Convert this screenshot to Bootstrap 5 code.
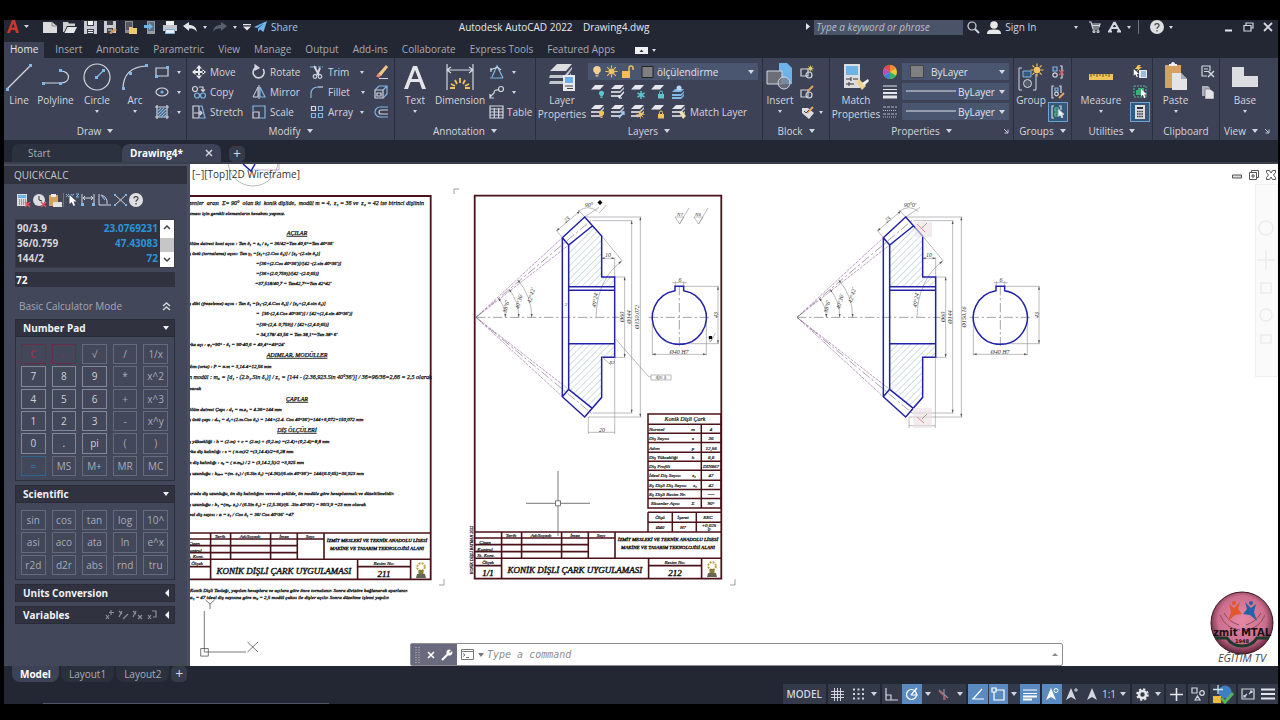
<!DOCTYPE html>
<html lang="en">
<head>
<meta charset="utf-8">
<meta name="viewport" content="width=device-width, initial-scale=1">
<title>Autodesk AutoCAD 2022 - Drawing4.dwg</title>
<link href="https://cdn.jsdelivr.net/npm/bootstrap@5.3.0/dist/css/bootstrap.min.css" rel="stylesheet">
<script src="https://cdn.jsdelivr.net/npm/bootstrap@5.3.0/dist/js/bootstrap.bundle.min.js"></script>
<style>
:root{--dark:#222733;--panel:#3d4256;--pal:#42475a;--box:#30333f;--txt:#d3d6de;--blue:#7fb8e6;--field:#4a5670}
body{font-family:"Open Sans","Noto Sans",sans-serif;font-size:10px;line-height:14px;color:var(--txt);background:#000;overflow:hidden}
.app{height:100vh;padding:20px 2px 16px 4px}
.tb{--bs-btn-padding-x:0;--bs-btn-padding-y:0;--bs-btn-border-width:0;--bs-btn-color:var(--txt);--bs-btn-font-size:10px;--bs-btn-line-height:14px;--bs-btn-border-radius:0;--bs-btn-hover-color:#fff;--bs-btn-hover-bg:#55607a;display:inline-flex;align-items:center;justify-content:center;flex:none;white-space:nowrap}
svg{display:block;flex:none;overflow:visible}
.i{fill:none;stroke:#d3d6de;stroke-width:1.2}
.s10{width:10px}.s14{width:14px}.s16{width:16px}.s20{width:20px}.s26{width:26px}.s30{width:30px}
.car{display:block;flex:none;width:0;height:0;border:3px solid transparent;border-top:4px solid currentColor;border-bottom:0}
.car.tiny{border-width:2px;border-top-width:3px;border-bottom:0}
.car.lft{border:4px solid transparent;border-right-color:currentColor;border-left:0}
.car.up{border-bottom:3px solid #888;border-top:0}
.title-row{height:22px;background:var(--dark);color:#e6e8ec}
.win-btns{margin-left:40px}
.search-in{width:149px;height:15px;background:#4b5369;border:0;color:#dfe2ea;font-style:italic;padding:0 2px}
.search-in::placeholder{color:#b9bdca}
.tab-row{height:16px;background:var(--dark)}
.tab-row a{color:#a7abb6;text-decoration:none;padding:0 7px;height:16px}
.tab-row a.active{background:var(--panel);color:#e6e8ec;padding:0 6px}
.ribbon{display:grid;grid-template-columns:183fr 208fr 141fr 227fr 67fr 184fr 58fr 81fr 67fr 58fr;background:var(--panel);height:82px}
.rpanel{border-right:1px solid #2a2f3d;min-width:0;display:flex;flex-direction:column}
.rpanel:last-child{border:0}
.rbody{display:flex;height:64px;padding-top:4px}
.rfoot{height:18px;display:flex;align-items:center;justify-content:center;gap:6px;position:relative}
.rfoot svg{position:absolute;right:4px;top:6px}
.big{flex-direction:column;justify-content:flex-start;height:60px}
.big svg{height:31px}
.big .car{margin-top:3px}
.colm{display:flex;flex-direction:column}
.colm>*{height:20px}
.rowb{gap:3px;justify-content:flex-start}
.fieldw{background:var(--field);height:17px;margin:1px 0 2px;position:relative;gap:3px}
.fieldw select{appearance:none;background:none;border:0;color:#e0e3ea;font-size:10px;padding:0;flex:1;min-width:0;outline-offset:0}
.fieldw select option{color:#000}
.on{background:#35597c;outline:1px solid #6ea3cf;outline-offset:-1px}
.doc-row{height:24px;background:var(--dark);border-bottom:2px solid #3a3f4e;padding-left:8px}
.dtab{height:18px;color:#a9adb8;text-decoration:none;background:#2c313f;border-radius:7px 7px 0 0}
.dtab.active{background:var(--panel);color:#fff;font-weight:700}
.plus{width:16px;height:16px;background:#363b4a;border-radius:5px;font-size:14px}
.palette{width:186px;background:var(--pal);border-right:3px solid #4a4e63;border-top:2px solid #4a4f60}
.pal-head{height:18px;background:var(--box);padding-left:10px;color:#c5c8d0}
.pal-body{padding:0 12px 0 11px}
.tools{padding:9px 0 12px}
.mode-row{padding:12px 4px 6px;color:#a4a8b5}
.hist{background:var(--box);height:49px;border:1px solid #393d4a}
.hist dl{line-height:15px;margin:0;padding:1px 2px 0 1px;font-weight:700}
.hist dt{font-weight:700}.hist dd{color:#2c93d8;margin:0}
.sbar{width:14px;background:#fff;color:#444}
.sbar b{height:14px;background:#c6c6c8}
.calc-in{width:100%;height:15px;background:var(--box);border:0;color:#fff;font-weight:700;padding:0 1px;display:block}
.sec-h{height:18px;background:var(--box);border:1px solid #282c38;color:#f0f1f4;font-weight:700;padding:0 5px 0 7px;width:100%;display:flex;align-items:center;justify-content:space-between}
.sec-b{border:1px solid #2c303d;border-top:0;padding:7px 6px 4px 5px}
.keys{display:grid;grid-template-columns:repeat(5,1fr);gap:2px 6px}
.keys button{border:1px solid #666b7c;background:none;color:#a8acb8;font-size:10px;line-height:14px;padding:0;min-width:0}
.keys .n{border-color:#82879a;color:#cfd2da}
.keys .r{border-color:#6b2c45;color:#96304a;font-weight:700}
.keys .e{border-color:#2f6690;color:#3587c0}
.canvas{background:#fff;min-width:0;overflow:hidden}
.cad{position:absolute;inset:0;width:100%;height:100%;font-family:"Liberation Serif",serif;font-style:italic}
.vlabel{position:absolute;left:2px;top:3px;color:#333}
.vwin{position:absolute;right:2px;top:6px;gap:7px}
.navbar-strip{position:absolute;right:0;top:20px;width:23px;height:193px;background:#fafafa;border:1px solid #f0f0f0}
.cmd{position:absolute;left:220px;bottom:0;width:60%;height:23px;border:1px solid #8c8c92;background:#fff;border-radius:2px}
.cmd-grip{width:46px;background:#6a6a7e;color:#fff}
.cmd input{border:0;flex:1;min-width:0;font:italic 10px "DejaVu Sans Mono",monospace;color:#555;padding:0 3px}
.cmd input::placeholder{color:#8e8e8e;opacity:1}
.logo{position:absolute;right:2px;bottom:0}
.bottom{height:38px;background:var(--dark)}
.lrow{gap:2px}
.ltab{height:16px;text-decoration:none;color:#a9adb8;background:#2b303e;border-radius:0 0 8px 8px}
.ltab.active{background:var(--panel);color:#fff;font-weight:700}
.status{height:20px;gap:2px}
.status>div{background:#353a4a;display:flex;align-items:center}
.status .tb{height:20px}
.status .s14{width:12px}
.status .a{background:#5b8ac0}
.status .a+.a{border-left:1px solid #353a4a}
.tline{position:absolute;left:39px;bottom:0;width:286px;height:1px;background:#4d5566}
</style>
</head>
<body>
<svg width="0" height="0" class="position-absolute" aria-hidden="true">
<defs>
 <symbol id="stack" viewBox="0 0 14 14"><path d="M4 0h9L9 4H0z" fill="#e4e6ea"/><path d="M0 6h9l4-4v2L9 8H0zM0 10h9l4-4v2l-4 4H0z" fill="#c3c6cf"/></symbol>
 <symbol id="sheet" viewBox="0 0 14 14"><path d="M4 1h9L9 5.500H0z" fill="#e4e6ea"/></symbol>
 <symbol id="lock" viewBox="0 0 8 8"><path d="M1 3.500h6V8H1z" fill="currentColor"/><path d="M2.500 3.500V2a1.500 1.500 0 0 1 3 0v1.500" fill="none" stroke="currentColor"/></symbol>
 <symbol id="bulb" viewBox="0 0 10 14"><path d="M5 1a4 4 0 0 0-2 7.500V10h4V8.500A4 4 0 0 0 5 1zM3.500 11h3v1.500h-3z" fill="currentColor"/></symbol>
 <symbol id="sun" viewBox="0 0 14 14"><circle cx="7" cy="7" r="3.300" fill="#f3c25b"/><path d="M7 .500v3M7 10.500v3M.500 7h3M10.500 7h3M2.400 2.400l2 2M9.600 9.600l2 2M2.400 11.600l2-2M9.600 4.400l2-2" stroke="#f3c25b" stroke-width="1.200"/></symbol>
 <symbol id="cursor" viewBox="0 0 8 12"><path d="M1 0v9l2.200-2L5 11l1.500-.7L5 6.500h3z" fill="#fff"/></symbol>
 <symbol id="launch" viewBox="0 0 6 6"><path d="M1 1l4 4M5 1.500V5H1.500" fill="none" stroke="#c5c8d0"/></symbol>
 <pattern id="hat" width="14" height="14" patternUnits="userSpaceOnUse" patternTransform="rotate(45)"><path d="M1 0v14" stroke="#8fb0ba" stroke-width="1.500"/></pattern>
 <symbol id="gear" viewBox="0 0 900 800">
  <path d="M356 195L427 138L455 168V291H494V320H356zM356 491H494V532H455V652L427 685L356 628z" fill="url(#hat)"/>
  <g fill="none" stroke="#b985c4" stroke-width="2.500" stroke-dasharray="9 3"><path d="M78 412L337 173M78 412L356 195M78 412L337 650M78 412L356 628"/></g>
  <g fill="none" stroke="#777" stroke-width="2" stroke-dasharray="28 8 7 8"><path d="M78 412H508M78 412L427 118M78 412L427 702M596 412H780M688 318V506"/></g>
  <g fill="none" stroke="#8d8d92" stroke-width="1.800">
   <path d="M166 412A88 88 0 0 0 145 355M206 412A128 128 0 0 0 177 328M245 412A167 167 0 0 0 203 300"/>
   <path d="M337 173L318 150M404 111L385 90M320 152L389 94M385 94Q414 72 442 94M404 111L447 82"/>
   <path d="M455 235H494M494 291V232M455 168L517 243M515 243Q440 300 438 412"/>
   <path d="M404 111H574M427 122H547M545 122V699M571 111V711M494 291H526M494 532H526M524 291V532M415 711H574M427 699H547"/>
   <path d="M607 412V526M769 412V526M607 523H769M701 319H806M688 491H806M804 319V491M668 308H710M676 319V304M701 319V304"/>
  </g>
  <g fill="#555"><path d="M389 94l-9 3 5 5zM320 152l9-3-5-5zM455 235l9-3v6zM494 235l-9-3v6zM607 523l10-3v6zM769 523l-10-3v6zM804 319l-3 10h6zM804 491l-3-10h6zM524 291l-3 10h6zM524 532l-3-10h6zM545 122l-3 10h6zM545 699l-3-10h6zM571 111l-3 10h6zM571 711l-3-10h6zM166 412l-3-10h6zM206 412l-3-10h6zM245 412l-3-10h6zM145 355l8 4-5 5zM177 328l8 5-5 4zM203 300l8 5-5 4zM515 243l-10 4 4 5z"/></g>
  <g fill="none" stroke="#2222a8" stroke-width="4.500"><path d="M337 173L404 111L455 168V291H494V532H455V652L404 711L337 650zM337 173L356 195L427 138M356 195V628L427 685M356 628L337 650M356 320H494M356 331H494M356 491H494"/><path d="M675 332A81 81 0 1 0 701 332V319H675z"/></g>
 </symbol>
 <symbol id="block" viewBox="0 0 250 50"><g fill="none" stroke="#4a1219" stroke-width="1.600"><path d="M1 1H247.600M1 7H141M1 13.600H114.300M1 20.600H114.300M1 27.300H247.600M1 34.600H27.600M174.600 34.600H227.600M27.600 1V47.600M47.600 1V27.300M87.600 1V27.300M114.300 1V27.300M141 1V27.300M174.600 27.300V47.600M227.600 27.300V47.600"/></g>
  <path d="M234 42h8l1 4h-10z" fill="#665"/><circle cx="238" cy="35" r="3.800" fill="none" stroke="#bfa545" stroke-width="2" stroke-dasharray="2 1"/><path d="M235.500 38h5v4h-5z" fill="#8a7a3c"/></symbol>
</defs>
</svg>

<div class="app d-flex flex-column">
<header>
 <div class="title-row d-flex align-items-center pb-2">
  <div class="d-flex align-items-center">
   <button class="tb btn s26" aria-label="Application menu"><svg width="22" height="14"><path d="M1 13L6 0h3l4 13h-3l-1-3H5l-1 3zM5.500 7.500h3L7.300 3.500z" fill="#c8382e"/><path d="M18 5h5l-2.500 3z" fill="#d3d6de"/></svg></button>
   <span class="s10"></span>
   <button class="tb btn s20" aria-label="New"><svg width="14" height="12"><path d="M0 1h9l5 4v7H0z" fill="#dcdcdc"/><path d="M9 1v4h5" fill="none" stroke="#888"/></svg></button>
   <button class="tb btn s20" aria-label="Open"><svg width="14" height="12"><path d="M0 1h5l1 1.500h6V5H4l-3 6H0z" fill="#cfcfcf"/><path d="M4.500 6H14l-3 6H1.500z" fill="#e6e6e6"/></svg></button>
   <button class="tb btn s20" aria-label="Save"><svg width="13" height="13"><path d="M0 0h13v13H0z" fill="#c9cbd0"/><path d="M3 0h7v5H3zM3 8h7v5H3z" fill="#3c3f49"/><path d="M4 0h5v4H4zM4 9h5v1H4zM4 11h5v1H4z" fill="#f0f0f0"/></svg></button>
   <button class="tb btn s20" aria-label="Save As"><svg width="13" height="13"><path d="M0 0h12v12H0z" fill="#c9cbd0"/><path d="M3 0h6v4H3zM3 7h6v5H3z" fill="#3c3f49"/><path d="M4 8.500h4v1H4z" fill="#f0f0f0"/><path d="M5 12l6-5 2 2-6 4z" fill="#d99c5b"/></svg></button>
   <button class="tb btn s20" aria-label="Open from web"><svg width="13" height="13"><path d="M1 0h8v12H1z" fill="#8c8e93"/><path d="M2 1h6v8H2z" fill="#55575e"/><path d="M5 6h3l1 1h4v6H5z" fill="#efc874"/></svg></button>
   <button class="tb btn s20" aria-label="Save to web"><svg width="13" height="13"><path d="M3 0h8v13H3z" fill="#9b9da3"/><path d="M4 1h6v9H4z" fill="#5b7084"/><path d="M0 4h5V2l4 3.500L5 9V7H0z" fill="#6fb4ea"/></svg></button>
   <button class="tb btn s20" aria-label="Plot"><svg width="14" height="13"><path d="M3 0h8v4H3z" fill="#eee"/><path d="M0 4h14v6H0z" fill="#c3c5ca"/><path d="M2 8h10v5H2z" fill="#7ab3e0"/><path d="M3 9h8v3H3z" fill="#e9eef3"/></svg></button>
   <button class="tb btn s20" aria-label="Undo"><svg width="14" height="10"><path d="M0 4l6-4v3c5 0 7 2 8 7-2-3-4-3.500-8-3.500V9z" fill="#e3e5ea"/></svg></button>
   <button class="tb btn s10" aria-label="Undo list"><i class="car tiny"></i></button>
   <button class="tb btn s20" aria-label="Redo"><svg width="14" height="10"><path d="M14 4L8 0v3C3 3 1 5 0 10c2-3 4-3.500 8-3.500V9z" fill="#5b606e"/></svg></button>
   <button class="tb btn s10" aria-label="Redo list"><i class="car tiny"></i></button>
   <button class="tb btn s14" aria-label="Customize quick access"><svg width="8" height="7"><path d="M0 0h8v1.200H0zM0 2.500h8L4 6.500z" fill="#e3e5ea"/></svg></button>
   <button class="tb btn gap-1" style="color:#9fcbee"><svg width="13" height="12"><path d="M0 6L13 0 9.500 11 6 8.500 4 11V7.500L10 2.500 3 7z" fill="#6db5ec"/></svg>Share</button>
  </div>
  <div class="flex-fill text-center ps-2">Autodesk AutoCAD 2022 &nbsp;&nbsp; Drawing4.dwg</div>
  <div class="d-flex align-items-center">
   <svg width="12" height="8"><path d="M4 0v7l4-3.500z" fill="#e3e5ea"/></svg>
   <input class="search-in" type="search" placeholder="Type a keyword or phrase" aria-label="Type a keyword or phrase">
   <button class="tb btn s20" aria-label="Search"><svg width="12" height="12" class="i"><circle cx="5" cy="5" r="4"/><path d="M8 8l4 4" stroke-width="2"/></svg></button>
   <button class="tb btn gap-1 ms-1"><svg width="14" height="13" fill="#e8e8e8"><circle cx="7" cy="4" r="3.800"/><path d="M0 13c0-4 3-4.500 7-4.500s7 .5 7 4.500z"/></svg>Sign In</button>
   <button class="tb btn s14 ms-4 ps-3" aria-label="Account list"><i class="car tiny"></i></button>
   <button class="tb btn s20 ms-2" aria-label="App store"><svg width="11" height="12" class="i"><path d="M0 1h2l2 7h6M3 3h8l-1 3H4M3.500 4.500h7"/><circle cx="5" cy="10.500" r="1"/><circle cx="9" cy="10.500" r="1"/></svg></button>
   <button class="tb btn s20" aria-label="Autodesk apps"><svg width="13" height="12" class="i" style="stroke-width:2"><path d="M6.500 1L1.500 10M6.500 1l5 9M4 7h5M0 10.500h4M9 10.500h4"/></svg></button>
   <button class="tb btn s10" aria-label="Apps list"><i class="car tiny"></i></button>
   <span class="border-start border-secondary ms-1 ps-2">&nbsp;</span>
   <button class="tb btn s14" aria-label="Help"><svg width="14" height="14"><circle cx="7" cy="7" r="7" fill="#dedfe3"/><path d="M4.800 5.400C5 2.800 9.200 3 9 5.500 8.900 7 7 7 7 8.800M7 10v1.500" fill="none" stroke="#444" stroke-width="1.200"/></svg></button>
   <button class="tb btn s14" aria-label="Help list"><i class="car tiny"></i></button>
   <div class="win-btns d-flex">
   <button class="tb btn s20" aria-label="Minimize"><svg width="8" height="10"><path d="M1 8.500h7" stroke="#e3e5ea" stroke-width="2"/></svg></button>
   <button class="tb btn s20" aria-label="Restore"><svg width="11" height="10" class="i"><path d="M3 3V1h7v5H8M1 3.500h7V9H1z"/></svg></button>
   <button class="tb btn s20" aria-label="Close"><svg width="10" height="10" class="i" style="stroke-width:1.800"><path d="M1 1l8 8M9 1L1 9"/></svg></button>
   </div>
  </div>
 </div>

 <nav class="tab-row d-flex align-items-center" aria-label="Ribbon tabs">
  <a class="active me-1" href="#">Home</a><a href="#">Insert</a><a href="#">Annotate</a><a href="#">Parametric</a><a href="#">View</a><a href="#">Manage</a><a href="#">Output</a><a href="#">Add-ins</a><a href="#">Collaborate</a><a href="#">Express Tools</a><a href="#">Featured Apps</a>
  <button class="tb btn s30 gap-1 ms-2" aria-label="Minimize ribbon"><svg width="13" height="7"><path d="M0 0h13v7H0z" fill="#f0f0f2"/><path d="M4.500 5h4l-2-2.500z" fill="#333"/></svg><i class="car tiny"></i></button>
 </nav>

 <div class="ribbon">
  <section class="rpanel">
   <div class="rbody">
    <button class="tb btn big s30"><svg width="28" height="31" class="i"><path d="M2 27L26 3"/><path d="M1 26h3v3H1zM24 2h3v3h-3z" fill="#7fb8e6" stroke="none"/></svg>Line</button>
    <button class="tb btn big" style="width:43px"><svg width="30" height="31" class="i"><path d="M2 21h18c11-1 9-12 0-12"/><path d="M1 20h3v3H1zM18 20h3v3h-3zM18 7h3v3h-3z" fill="#7fb8e6" stroke="none"/></svg>Polyline</button>
    <button class="tb btn big" style="width:40px"><svg width="28" height="31" class="i"><circle cx="14" cy="15" r="13"/><path d="M14 15l7-7" stroke="#7fb8e6"/><path d="M12 14h3v3h-3zM19 7h3v3h-3z" fill="#7fb8e6" stroke="none"/></svg>Circle<i class="car tiny"></i></button>
    <button class="tb btn big" style="width:36px"><svg width="28" height="31" class="i"><path d="M2 27Q2 5 26 4"/><path d="M1 25h3v3H1zM24 2h3v3h-3zM8 10h3v3H8z" fill="#7fb8e6" stroke="none"/></svg>Arc<i class="car tiny"></i></button>
    <div class="colm">
     <button class="tb btn s30 gap-2" aria-label="Rectangle"><svg width="14" height="12" class="i"><path d="M1 2h12v8H1z"/><path d="M0 9h3v3H0zM11 0h3v3h-3z" fill="#7fb8e6" stroke="none"/></svg><i class="car tiny"></i></button>
     <button class="tb btn s30 gap-2" aria-label="Ellipse"><svg width="14" height="12" class="i"><ellipse cx="7" cy="6" rx="6" ry="4"/><circle cx="7" cy="6" r="1" fill="#7fb8e6" stroke="#7fb8e6"/></svg><i class="car tiny"></i></button>
     <button class="tb btn s30 gap-2" aria-label="Hatch"><svg width="14" height="14" class="i"><path d="M2 0v14M12 0v14M0 2h14M0 12h14"/><path d="M3 6l3-3M3 9l6-6M3 12l8-8M6 12l5-5M9 12l2-2" stroke="#7fb8e6"/></svg><i class="car tiny"></i></button>
    </div>
   </div>
   <div class="rfoot">Draw <i class="car"></i></div>
  </section>

  <section class="rpanel">
   <div class="rbody ps-1">
    <div class="colm" style="width:60px">
     <button class="tb btn rowb"><svg width="16" height="14" fill="#e8e9ed"><path d="M7 3h2v8H7zM3 6h10v2H3zM8 0l3 3.500H5zM8 14l3-3.500H5zM1 7l3.500-3v6zM15 7l-3.500-3v6z"/></svg>Move</button>
     <button class="tb btn rowb"><svg width="16" height="14" class="i"><circle cx="4" cy="4" r="2.500"/><circle cx="6" cy="10.500" r="2.500" stroke="#7fb8e6"/><circle cx="12" cy="10.500" r="2.500" stroke="#7fb8e6"/><path d="M8 2h4v4M10 4.500l2 2 2-2"/></svg>Copy</button>
     <button class="tb btn rowb"><svg width="16" height="14" class="i"><path d="M2 1h6v12H2zM3 8h8M9 6l2 2-2 2"/><path d="M9 1h2l3 12H9" stroke="#7fb8e6"/></svg>Stretch</button>
    </div>
    <div class="colm" style="width:58px">
     <button class="tb btn rowb"><svg width="16" height="14" class="i"><path d="M5 2.500a5.500 5.500 0 1 0 7 1.500" stroke-width="1.600"/><path d="M4 0v5l4-2z" fill="#d3d6de"/></svg>Rotate</button>
     <button class="tb btn rowb"><svg width="16" height="14" class="i"><path d="M7 2v10H2zM8 0v14" stroke-width="1"/><path d="M9 2v10h5z" stroke="#7fb8e6"/></svg>Mirror</button>
     <button class="tb btn rowb"><svg width="16" height="14" class="i"><path d="M2 7h6v6H2z"/><path d="M2 6V1h12v12H9" stroke="#7fb8e6"/></svg>Scale</button>
    </div>
    <div class="colm" style="width:62px">
     <button class="tb btn rowb"><svg width="16" height="14" class="i"><path d="M1 2h13" stroke-dasharray="3 1" stroke="#7fb8e6"/><path d="M5 1l5 9M11 3l-3 7" stroke-width="2"/><circle cx="6" cy="11.500" r="1.800"/><circle cx="11" cy="11.500" r="1.800"/></svg>Trim<i class="car tiny ms-2"></i></button>
     <button class="tb btn rowb"><svg width="16" height="14" class="i"><path d="M2 13V9" stroke="#7fb8e6"/><path d="M2 9Q2 2 9 2" stroke="#7fb8e6"/><path d="M9 2h5"/></svg>Fillet<i class="car tiny ms-2"></i></button>
     <button class="tb btn rowb"><svg width="16" height="14" class="i"><path d="M2.500 1.500h4v4h-4z"/><path d="M9.500 1.500h4v4h-4zM2.500 8.500h4v4h-4zM9.500 8.500h4v4h-4z" stroke="#7fb8e6"/></svg>Array<i class="car tiny ms-1"></i></button>
    </div>
    <div class="colm">
     <button class="tb btn s20" aria-label="Erase"><svg width="14" height="14"><path d="M4 9l8-9 2 2-7 9z" fill="#f0c987"/><path d="M4 8l3 3-2 1.500-3-1z" fill="#e98377"/><path d="M5 13.500h9" stroke="#d3d6de"/></svg></button>
     <button class="tb btn s20" aria-label="Explode"><svg width="14" height="14" class="i"><path d="M1 5h8v8H1zM3 8h4v3H3z"/><path d="M1 5l4-4h8v8l-4 4M9 5l4-4" stroke="#7fb8e6"/></svg></button>
     <button class="tb btn s20" aria-label="Offset"><svg width="14" height="14" class="i"><path d="M14 2H6a5 5 0 0 0 0 10h8" stroke="#7fb8e6"/><path d="M14 5H7a2 2 0 0 0 0 4h7"/></svg></button>
    </div>
   </div>
   <div class="rfoot">Modify <i class="car"></i></div>
  </section>

  <section class="rpanel">
   <div class="rbody">
    <button class="tb btn big" style="width:40px"><svg width="24" height="31"><path d="M1 27L10 4h4l9 23h-4l-2.500-7h-9L5 27zM8.500 17h7L12 8z" fill="#e4e6ea"/></svg>Text<i class="car tiny"></i></button>
    <button class="tb btn big" style="width:50px"><svg width="28" height="31" class="i"><path d="M1 2v26M27 2v26M2 8h24M5 5L1 8l4 3M23 5l4 3-4 3"/><path d="M14 16v5M9 18l2 4M19 18l-2 4M5 22l4 2M23 22l-4 2M4 26h5M24 26h-5" stroke="#f3c25b" stroke-width="1.800"/></svg>Dimension</button>
    <div class="colm ps-1">
     <button class="tb btn rowb" aria-label="Angular dimension"><svg width="16" height="14" class="i"><path d="M1 13h13M3 12L8 1l6 12" stroke="#7fb8e6"/><path d="M1 5l8-3M2 3v4M8 2l4 3"/></svg><i class="car tiny ms-1"></i></button>
     <button class="tb btn rowb" aria-label="Leader"><svg width="16" height="14" class="i"><circle cx="12" cy="4" r="2.500"/><path d="M10 5Q5 4 5 8L1 12M1 9v4h4"/></svg><i class="car tiny ms-1"></i></button>
     <button class="tb btn rowb"><svg width="15" height="14" class="i"><path d="M1 1h13v12H1zM1 4h13M1 7h13M1 10h13M5.300 3v10M9.600 3v10"/></svg>Table</button>
    </div>
   </div>
   <div class="rfoot">Annotation <i class="car"></i></div>
  </section>

  <section class="rpanel">
   <div class="rbody">
    <button class="tb btn big" style="width:52px"><svg width="28" height="31"><path d="M9 2h15l-6 7H2z" fill="#dcdde1"/><path d="M2 13h15l7-8v2l-6 9H1zM2 19h15l6-8v2l-6 9H1z" fill="#c3c5cb"/><path d="M15 13h12v16H15z" fill="#e8e9ec"/><path d="M17 15h8v6h-8z" fill="#6bb0e6"/><path d="M17 24h8M19 26.500h6" stroke="#444"/></svg><span>Layer<br>Properties</span></button>
    <div class="colm flex-fill pe-1">
     <div class="fieldw d-flex align-items-center px-1">
      <svg width="10" height="13" style="color:#f6d28e"><use href="#bulb"/></svg>
      <svg width="13" height="13"><use href="#sun"/></svg>
      <svg width="13" height="14" fill="none"><path d="M1 6h8v7H1z" fill="#f1bd55"/><path d="M8 6V3a2 2 0 0 1 4 0v2" stroke="#f1bd55" stroke-width="1.500"/></svg>
      <svg width="13" height="12" class="ms-1"><path d="M1 .500h11v11H1z" fill="#808080" stroke="#222"/></svg>
      <select aria-label="Layer"><option>ölçülendirme</option></select><i class="car"></i>
     </div>
     <div class="d-flex">
      <button class="tb btn s20" aria-label="Layer off"><svg width="14" height="14" style="color:#5cc5cf"><use href="#sheet" y="-1"/><use href="#bulb" x="7" y="5" width="7" height="9"/></svg></button>
      <button class="tb btn s20" aria-label="Layer isolate"><svg width="14" height="14"><use href="#stack"/><path d="M13 7l-5 6M8 10v3h3" stroke="#fff" fill="none"/></svg></button>
      <button class="tb btn s20" aria-label="Layer freeze"><svg width="14" height="14"><use href="#sheet" y="-1"/><path d="M10 6v8M6.500 8l7 4M13.500 8l-7 4" stroke="#5cc5cf" stroke-width="1.500"/></svg></button>
      <button class="tb btn s20" aria-label="Layer lock"><svg width="14" height="14" style="color:#5cc5cf"><use href="#sheet" y="-1"/><use href="#lock" x="6" y="5" width="8" height="9"/></svg></button>
      <button class="tb btn s20" aria-label="Make current"><svg width="14" height="14"><path d="M4 4h9l-3 3H1zM1 9h9l3-3v2l-3 3H1zM1 12h9l3-3v2l-3 3H1z" fill="#7fb8e6"/><circle cx="8" cy="3" r="2.500" fill="#b7d8f2"/></svg></button>
     </div>
     <div class="d-flex">
      <button class="tb btn s20" aria-label="All layers on"><svg width="14" height="14" style="color:#f3c25b"><use href="#stack"/><use href="#bulb" x="7" y="5" width="7" height="9"/></svg></button>
      <button class="tb btn s20" aria-label="Unisolate"><svg width="14" height="14"><use href="#stack"/><path d="M8 13l5-6M10 7h3v3" stroke="#9cd0f7" fill="none" stroke-width="1.300"/></svg></button>
      <button class="tb btn s20" aria-label="Thaw layers"><svg width="14" height="14"><use href="#stack"/><use href="#sun" x="5" y="5" width="9" height="9"/></svg></button>
      <button class="tb btn s20" aria-label="Unlock layer"><svg width="14" height="14" style="color:#f3c25b"><use href="#sheet" y="-1"/><use href="#lock" x="6" y="5" width="8" height="9"/></svg></button>
      <button class="tb btn gap-1 ps-1"><svg width="14" height="14"><use href="#stack"/><path d="M7 7l3-1 4 5-3 3z" fill="#efe3b0"/></svg>Match Layer</button>
     </div>
    </div>
   </div>
   <div class="rfoot">Layers <i class="car"></i></div>
  </section>

  <section class="rpanel">
   <div class="rbody">
    <button class="tb btn big" style="width:34px"><svg width="30" height="31"><path d="M14 1h8l5 5v16H14z" fill="#6db3ea"/><path d="M2 9h15v13H2z" fill="#6c6f78" stroke="#d3d6de"/><circle cx="19" cy="21" r="6" fill="#777b86" fill-opacity=".7" stroke="#d3d6de"/></svg>Insert<i class="car tiny"></i></button>
    <div class="colm">
     <button class="tb btn s20" aria-label="Create block"><svg width="14" height="14" class="i"><path d="M1 4h7v7H1z"/><circle cx="9" cy="10" r="3"/><use href="#sun" x="7" y="0" width="7" height="7"/></svg></button>
     <button class="tb btn s20" aria-label="Edit block"><svg width="14" height="14" class="i"><path d="M1 5h7v7H1z"/><circle cx="9" cy="10" r="3"/><path d="M8 6l5-5" stroke="#e9a35f" stroke-width="2"/></svg></button>
     <button class="tb btn s30 gap-1" aria-label="Edit attributes"><svg width="14" height="14"><path d="M1 3h6l6 5-5 6-7-6z" fill="#dcdde1"/><path d="M6 8l6-6" stroke="#e9a35f" stroke-width="2"/><path d="M3 6l2 2 3-3" stroke="#444" fill="none"/></svg><i class="car tiny"></i></button>
    </div>
   </div>
   <div class="rfoot">Block <i class="car"></i></div>
  </section>

  <section class="rpanel">
   <div class="rbody">
    <button class="tb btn big" style="width:52px"><svg width="28" height="31"><path d="M2 2h16v24H2z" fill="#dcdde1"/><path d="M4 4h12v9H4z" fill="#6fb2e6"/><path d="M4 17h5M11 17h5M4 22h8M9 15v4M7 20v4" stroke="#333"/><path d="M14 20l3-3 7 7-4 4z" fill="#efd28c"/><path d="M20 21l6-4 1 2-5 5z" fill="#eee"/></svg><span>Match<br>Properties</span></button>
    <div class="colm s16">
     <button class="tb btn" aria-label="Color"><svg width="14" height="14"><circle cx="7" cy="7" r="7" fill="#e9c93e"/><path d="M7 7V0a7 7 0 0 1 6 3.500z" fill="#f08a3c"/><path d="M7 7L1 3.500A7 7 0 0 1 7 0z" fill="#e2485a"/><path d="M7 7L1 10.500a7 7 0 0 1 0-7z" fill="#b04fc0"/><path d="M7 7v7a7 7 0 0 1-6-3.500z" fill="#3f7fe0"/><path d="M7 7l6 3.500A7 7 0 0 1 7 14z" fill="#35b56a"/></svg></button>
     <button class="tb btn" aria-label="Lineweight"><svg width="14" height="14"><path d="M0 1h14M0 4.500h14" stroke="#e4e6ea"/><path d="M0 8h14" stroke="#e4e6ea" stroke-width="2"/><path d="M0 12h14" stroke="#e4e6ea" stroke-width="3"/></svg></button>
     <button class="tb btn" aria-label="Linetype"><svg width="14" height="14"><path d="M0 2h14M0 9h14" stroke="#b6bac4" stroke-dasharray="3 1"/><path d="M0 5.500h14M0 12h14" stroke="#b6bac4" stroke-dasharray="1 1"/></svg></button>
    </div>
    <div class="colm flex-fill ps-1 pe-1">
     <div class="fieldw d-flex align-items-center ps-2 pe-1"><svg width="14" height="13"><path d="M.500.500h13v12H.500z" fill="#808080" stroke="#444"/></svg><select class="ps-1" aria-label="Object color"><option>ByLayer</option></select><i class="car"></i></div>
     <div class="fieldw d-flex align-items-center ps-1 pe-1"><svg width="49" height="3"><path d="M0 1h50" stroke="#e0e3ea"/></svg><select aria-label="Lineweight"><option>ByLayer</option></select><i class="car"></i></div>
     <div class="fieldw d-flex align-items-center ps-1 pe-1"><svg width="49" height="3"><path d="M0 1h50" stroke="#e0e3ea"/></svg><select aria-label="Linetype"><option>ByLayer</option></select><i class="car"></i></div>
    </div>
   </div>
   <div class="rfoot">Properties <i class="car"></i><svg width="6" height="6"><use href="#launch"/></svg></div>
  </section>

  <section class="rpanel">
   <div class="rbody">
    <button class="tb btn big" style="width:34px"><svg width="28" height="31"><path d="M5 6H2v22h3M16 28h3V12" fill="none" stroke="#d3d6de"/><path d="M6 9h8v6H6z" fill="#34567a" stroke="#7fb8e6"/><circle cx="10.500" cy="21.500" r="4" fill="#555b6b" stroke="#d3d6de"/><use href="#sun" x="13" y="1" width="14" height="14"/></svg>Group</button>
    <div class="colm">
     <button class="tb btn s20" aria-label="Ungroup"><svg width="14" height="14" class="i"><path d="M2 2h4v4H2z" stroke="#7fb8e6"/><circle cx="4" cy="10" r="2.200"/><path d="M9 1h2v12H9"/><path d="M8 5l5 5M13 5l-5 5" stroke="#e05566"/></svg></button>
     <button class="tb btn s20" aria-label="Group edit"><svg width="14" height="14" class="i"><path d="M3 1H1v12h2M8 1h2v7"/><circle cx="5.500" cy="9" r="1.800"/><path d="M4 3h3v3H4z" stroke="#7fb8e6"/><path d="M8 13l5-5" stroke="#e9a35f" stroke-width="2"/></svg></button>
     <button class="tb btn s20 on" aria-label="Group selection"><svg width="14" height="14" class="i"><path d="M3 1H1v12h2M8 1h2v4"/><path d="M4 3h3v3H4zM4 8h3v3H4z" stroke="#58c08a"/><use href="#cursor" x="7" y="4" width="6" height="10"/></svg></button>
    </div>
   </div>
   <div class="rfoot">Groups <i class="car"></i></div>
  </section>

  <section class="rpanel">
   <div class="rbody">
    <button class="tb btn big" style="width:58px"><svg width="26" height="31"><path d="M1 12h24v6H1z" fill="#efc45f"/><path d="M3 12v3M6 12v2M9 12v3M12 12v2M15 12v3M18 12v2M21 12v3" stroke="#6b5217"/></svg>Measure<i class="car tiny"></i></button>
    <div class="colm">
     <button class="tb btn s20" aria-label="Quick select"><svg width="14" height="14"><path d="M5 0L2 4h3L3 7l6-5H6l2-2z" fill="#f3c25b"/><path d="M6 5h8v8H6z" fill="#e6e8ec"/><path d="M8 7h5M8 9h5M8 11h5" stroke="#4e8fc7"/><use href="#cursor" x="0" y="4" width="6" height="9"/></svg></button>
     <button class="tb btn s20" aria-label="Select all"><svg width="14" height="14"><path d="M1 1h12v11H1z" fill="none" stroke="#4fbf86" stroke-dasharray="2 1"/><path d="M3 5h6v5H3zM5 3h6v5H5z" fill="#3fae76"/><use href="#cursor" x="7" y="4" width="7" height="10"/></svg></button>
     <button class="tb btn s20 on" aria-label="Quick calculator"><svg width="12" height="14"><path d="M1 0h10v14H1z" fill="#dcdde1"/><path d="M3 2h6v2H3z" fill="#333"/><path d="M3 6.500h6M3 9h6M3 11.500h6" stroke="#333" stroke-width="1.500" stroke-dasharray="1.500 .7"/></svg></button>
    </div>
   </div>
   <div class="rfoot">Utilities <i class="car"></i></div>
  </section>

  <section class="rpanel">
   <div class="rbody">
    <button class="tb btn big" style="width:45px"><svg width="26" height="31"><path d="M2 3h16v23H2z" fill="#d3a35f"/><path d="M6 4h8V2h-2a2 2 0 0 0-4 0H6z" fill="#f0f0f0"/><path d="M9 11h9l6 6v11H9z" fill="#e4e4e6"/><path d="M18 11v6h6z" fill="#a9abb2"/></svg>Paste<i class="car tiny"></i></button>
    <div class="colm">
     <button class="tb btn s20" aria-label="Cut"><svg width="14" height="14" class="i"><path d="M1 1h8v5M1 1v10h5M3 4h4M3 6.500h4"/><path d="M7 6l6 6M13 6l-6 6" stroke-width="1.500"/></svg></button>
     <button class="tb btn s20" aria-label="Copy clip"><svg width="14" height="14"><path d="M1 1h6l2 2v8H1z" fill="#aeb1ba"/><path d="M4 4h5l4 3v7H4z" fill="#e4e4e6" stroke="#3d4256" stroke-width=".5"/></svg></button>
    </div>
   </div>
   <div class="rfoot">Clipboard</div>
  </section>

  <section class="rpanel">
   <div class="rbody justify-content-center pe-2">
    <button class="tb btn big"><svg width="28" height="31"><path d="M1 5h12v9h14v11H1z" fill="#dcdde1"/></svg>Base<i class="car tiny"></i></button>
   </div>
   <div class="rfoot pe-3">View <i class="car"></i><svg width="6" height="6" class="me-1"><use href="#launch"/></svg></div>
  </section>
 </div>

 <nav class="doc-row d-flex align-items-end" aria-label="Open drawings">
  <a class="dtab d-flex align-items-center px-3" style="width:110px" href="#">Start</a>
  <a class="dtab active d-flex align-items-center justify-content-between px-2" style="width:99px" href="#">Drawing4*<svg width="8" height="8" class="i" style="stroke-width:1.500"><path d="M1 1l6 6M7 1L1 7"/></svg></a>
  <button class="tb btn plus ms-2" aria-label="New drawing">+</button>
 </nav>
</header>

<div class="d-flex flex-fill overflow-hidden">
 <aside class="palette flex-shrink-0">
  <div class="pal-head d-flex align-items-center">QUICKCALC</div>
  <div class="pal-body">
   <div class="tools d-flex align-items-center">
    <button class="tb btn s16" aria-label="Clear"><svg width="13" height="13"><path d="M0 0h10v12H0z" fill="#dcdde1"/><path d="M1 1h8v3H1z" fill="#6fb2e6"/><path d="M2 6h7M2 8h7M2 10h7" stroke="#555" stroke-dasharray="1 1"/><path d="M8 8l5 5M13 8l-5 5" stroke="#e2505c" stroke-width="1.500"/></svg></button>
    <button class="tb btn s16" aria-label="Clear history"><svg width="13" height="13"><circle cx="6" cy="6" r="6" fill="#dcdde1"/><path d="M6 2v4l3 1" fill="none" stroke="#333"/><path d="M8 8l5 5M13 8l-5 5" stroke="#e2505c" stroke-width="1.500"/></svg></button>
    <button class="tb btn s16" aria-label="Paste value"><svg width="13" height="13"><path d="M0 1h9v11H0z" fill="#d3a35f"/><path d="M2 0h5v3H2z" fill="#eee"/><path d="M4 8h9v5H4z" fill="#e4e4e6"/></svg></button>
    <span class="border-start border-secondary">&#8203;</span>
    <button class="tb btn s16" aria-label="Get coordinates"><svg width="13" height="14"><path d="M0 1l3 3M3 1L0 4M5 1l1 1.500L8 1M10 1h3l-3 3h3" stroke="#7fb8e6" fill="none"/><use href="#cursor" x="2" y="2" width="9" height="12"/></svg></button>
    <button class="tb btn s16" aria-label="Distance between points"><svg width="14" height="12" class="i"><path d="M1 0v9M13 0v9M2 4h10M4 2L2 4l2 2M10 2l2 2-2 2" stroke-width="1"/><path d="M0 9h3v3H0zM11 9h3v3h-3z" fill="#7fb8e6" stroke="none"/></svg></button>
    <button class="tb btn s16" aria-label="Angle of line"><svg width="13" height="12" class="i"><path d="M1 0v11h12M3 1Q10 3 9 10" stroke-width="1"/><path d="M3 1l4 5" stroke="#7fb8e6"/></svg></button>
    <button class="tb btn s16" aria-label="Intersection"><svg width="13" height="12" class="i"><path d="M1 1l11 10M12 1L1 11" stroke-width="1"/><path d="M0 0h2v2H0zM11 0h2v2h-2zM0 10h2v2H0zM11 10h2v2h-2z" fill="#7fb8e6" stroke="none"/></svg></button>
    <button class="tb btn s16" aria-label="Help"><svg width="14" height="14"><circle cx="7" cy="7" r="7" fill="#dedfe3"/><path d="M4.800 5.400C5 2.800 9.200 3 9 5.500 8.900 7 7 7 7 8.800M7 10v1.500" fill="none" stroke="#444" stroke-width="1.200"/></svg></button>
   </div>
   <div class="hist d-flex">
    <dl class="flex-fill"><div class="d-flex justify-content-between"><dt>90/3.9</dt><dd>23.0769231</dd></div><div class="d-flex justify-content-between"><dt>36/0.759</dt><dd>47.43083</dd></div><div class="d-flex justify-content-between"><dt>144/2</dt><dd>72</dd></div></dl>
    <div class="sbar d-flex flex-column justify-content-between">
     <svg width="14" height="16"><path d="M4 9l3-3 3 3" fill="none" stroke="#444" stroke-width="1.500"/></svg><b></b><svg width="14" height="14"><path d="M4 5l3 3 3-3" fill="none" stroke="#444" stroke-width="1.500"/></svg>
    </div>
   </div>
   <input class="calc-in mt-1" value="72" aria-label="Input">
   <div class="mode-row d-flex justify-content-between align-items-center">Basic Calculator Mode<svg width="9" height="9" class="i"><path d="M1 4l3.500-3L8 4M1 8l3.500-3L8 8" stroke-width="1.500"/></svg></div>
   <button class="sec-h">Number Pad <i class="car"></i></button>
   <div class="sec-b mb-1"><div class="keys" style="height:132px">
    <button class="r">C</button><button class="r">←</button><button>√</button><button>/</button><button>1/x</button>
    <button class="n">7</button><button class="n">8</button><button class="n">9</button><button>*</button><button>x^2</button>
    <button class="n">4</button><button class="n">5</button><button class="n">6</button><button>+</button><button>x^3</button>
    <button class="n">1</button><button class="n">2</button><button class="n">3</button><button>-</button><button>x^y</button>
    <button class="n">0</button><button class="n">.</button><button class="n">pi</button><button>(</button><button>)</button>
    <button class="e">=</button><button>MS</button><button>M+</button><button>MR</button><button>MC</button>
   </div></div>
   <button class="sec-h">Scientific <i class="car"></i></button>
   <div class="sec-b mb-1"><div class="keys" style="height:65px">
    <button>sin</button><button>cos</button><button>tan</button><button>log</button><button>10^</button>
    <button>asi</button><button>aco</button><button>ata</button><button>ln</button><button>e^x</button>
    <button>r2d</button><button>d2r</button><button>abs</button><button>rnd</button><button>tru</button>
   </div></div>
   <button class="sec-h mb-1">Units Conversion <i class="car lft"></i></button>
   <button class="sec-h">Variables <span class="d-flex gap-1 align-items-center ms-auto me-2"><svg width="10" height="10" class="i" style="stroke:#8b8f9b"><path d="M1 9l3-4M1 5l3 4M6 0v5M4 2.500h5"/></svg><svg width="10" height="10" class="i" style="stroke:#8b8f9b"><path d="M0 1l3 3M3 1L0 7M4 9l5-5"/></svg><svg width="10" height="10" class="i" style="stroke:#8b8f9b"><path d="M0 1l3 3M3 1L0 7M5 5l4 4M9 5L5 9"/></svg><svg width="10" height="10" class="i" style="stroke:#8b8f9b"><path d="M1 9l3-4M1 5l3 4M5 1h4v6H6"/></svg></span><i class="car lft"></i></button>
  </div>
 </aside>

 <main class="canvas position-relative flex-fill">
  <svg class="cad" role="img" aria-label="Bevel gear drawings"><g transform="translate(-190 -164)">
   <!-- partly visible view above the sheets -->
   <circle cx="253" cy="161" r="25" fill="none" stroke="#999" stroke-width=".7"/><path d="M243 164l8 7 4-7" fill="none" stroke="#2222a8" stroke-width="1.500"/><path d="M254 170h25v-6" fill="none" stroke="#b06bbd" stroke-width=".6"/>
   <!-- sheet frames -->
   <g fill="none" stroke="#4a1219" stroke-width="1.800"><path d="M180 196H430.700V579.300H180"/><path d="M474.700 195.700H721.300V578.700H474.700z"/></g>
   <use href="#block" x="474" y="531" width="250" height="50"/><use href="#block" x="183" y="532" width="250" height="50"/>
   <path d="M454 194v-5h5M730 585h5v-6M439 585h5v-6" fill="none" stroke="#888" stroke-width=".8"/>
   <!-- gear table -->
   <g fill="none" stroke="#4a1219" stroke-width="1.500"><path d="M648 414H721V508H648zM648 424.300H721M648 433.300H721M648 442.600H721M648 452.300H721M648 461.300H721M648 470.300H721M648 480.300H721M648 489.600H721M648 498.600H721M701.300 424.300V508M648 512.300H721M648 522.300H721M648 512.300V532M672.300 512.300V532M696.300 512.300V532"/></g>
   <!-- gears -->
   <use href="#gear" x="450" y="180" width="300" height="266.700"/><use href="#gear" x="771" y="180" width="300" height="266.700"/>
   <g fill="none" stroke="#8d8d92" stroke-width=".6"><path d="M614.700 357V434M588.300 417V434M588.300 432.300H614.700M935.300 357V428M909 417V428M909 425.700H935.300M599 213L606.500 205M614.700 338L649 377H651M651 375h20v5h-20zM658 375v5M665 375v5"/><path d="M675 217h9l-4.500 7zM679.500 224L689 208M694 217h9l-4.500 7zM698.500 224L708 208M708 337h5l-2.500 5zM710.500 342l5-9M602 357l9 8"/></g>
   <path d="M600 200l2.500 2.500-2.500 2.500-2.500-2.500zM709 336h3v3h-3z" fill="#000"/>
   <g fill="#e9e0e4" opacity=".6"><path d="M915 222h17v15h-17zM913 408h19v20h-19z"/></g><path d="M917 224l8 8M917 417l7 6" stroke="#e98a94" fill="none"/><path d="M927 223l-5 5M927 414l-5 5" stroke="#aaa27a" fill="none"/>
   <!-- dimension text -->
   <g font-size="6" fill="#333" text-anchor="middle">
    <g id="dims"><text transform="translate(568 221) rotate(-42)">23</text><text x="608" y="257">10</text><text transform="translate(597 300) rotate(-80)">49°24'</text><text transform="translate(624 317) rotate(-90)">Ø60</text><text transform="translate(631 317) rotate(-90)">Ø144</text><text transform="translate(508 307) rotate(-78)">38°6'</text><text transform="translate(521 302) rotate(-76)">40°36'</text><text transform="translate(533 296) rotate(-74)">42°42'</text><text x="680" y="282">6</text><text x="679" y="354">Ø40 H7</text><text transform="translate(718 315) rotate(-90)">43</text></g>
    <use href="#dims" x="321" y="0"/>
    <text x="589" y="207">90°</text><text x="910" y="207">90°0'</text><text transform="translate(639 317) rotate(-90)">Ø150,072</text><text transform="translate(966 317) rotate(-90)">Ø150,16</text><text x="602" y="432">20</text><text x="566" y="306" font-size="5">2</text><text x="680" y="216" font-size="5">N7</text><text x="698" y="216" font-size="5">N8</text><text x="612" y="364" font-size="5">R2</text>
    <text x="661" y="379" font-size="4">0,01 A</text>
   </g>
   <!-- title block and table text -->
   <g fill="#111" stroke="#111" stroke-width=".2" text-anchor="middle">
    <g id="tbt"><g font-size="5"><text x="511" y="537">Tarih</text><text x="541" y="537">AdıSoyadı</text><text x="575" y="537">İmza</text><text x="601" y="537">Sayı</text><text x="485" y="544">Çizen</text><text x="485" y="551">Kontrol</text><text x="486" y="557">St. Kont.</text><text x="488" y="564">Ölçek</text><text x="675" y="564">Resim No:</text>
     <g stroke-width=".35"><text x="668" y="541">İZMİT MESLEKİ VE TEKNİK ANADOLU LİSESİ</text><text x="668" y="549">MAKİNE VE TASARIM TEKNOLOJİSİ ALANI</text></g></g>
     <text x="575" y="573" font-size="9" stroke-width=".4">KONİK DİŞLİ ÇARK UYGULAMASI</text></g>
    <use href="#tbt" x="-291" y="1"/>
    <g font-size="9" stroke-width=".4"><text x="488" y="576">1/1</text><text x="675" y="576">212</text><text x="384" y="577">211</text></g>
    <text x="685" y="421" font-size="6">Konik Dişli Çark</text>
    <g font-size="5"><g text-anchor="start"><text x="649" y="431">Normal</text><text x="649" y="440">Diş Sayısı</text><text x="649" y="450">Adım</text><text x="649" y="459">Diş Yüksekliği</text><text x="649" y="468">Diş Profili</text><text x="649" y="477">İdeal Diş Sayısı</text><text x="649" y="487">Eş Dişli Diş Sayısı</text><text x="649" y="496">Eş Dişli Resim Nr.</text><text x="651" y="505">Eksenler Açısı</text></g>
     <text x="693" y="431">m</text><text x="693" y="440">z</text><text x="693" y="450">p</text><text x="693" y="459">h</text><text x="694" y="477">z₁</text><text x="695" y="487">z₂</text><text x="693" y="505">Σ</text>
     <text x="711" y="431">4</text><text x="711" y="440">36</text><text x="711" y="450">12,56</text><text x="711" y="459">8,8</text><text x="711" y="468">DIN867</text><text x="711" y="477">47</text><text x="711" y="487">42</text><text x="711" y="496">----</text><text x="711" y="505">90°</text>
     <text x="660" y="519">Ölçü</text><text x="683" y="519">İşaret</text><text x="708" y="519">EEC</text><text x="660" y="529">Ø40</text><text x="683" y="529">H7</text><text x="709" y="527">+0,025</text><text x="709" y="531">0</text></g>
    <text transform="translate(473 550) rotate(-90)" font-size="4">KONİK DİŞLİ BATMAN 2022</text>
   </g>
   <!-- calculation sheet -->
   <g fill="#111" stroke="#111" stroke-width=".25" font-size="6">
    <text x="189" y="205">zenler &#160;arası &#160;Σ= 90° &#160;olan iki &#160;konik dişlide, &#160;modül m = 4, &#160;z₁ = 36 ve &#160;z₂ = 42 ise birinci dişlinin</text>
    <text x="189" y="379">n modül : m₀ = [d₁ - (2.b₁.Sin δ₁)] / z₁ = [144 - (2.36,923.Sin 40°36')] / 36=96/36=2,66 = 2,5 olarak</text>
    <g text-anchor="middle" text-decoration="underline"><text x="297" y="235">AÇILAR</text><text x="297" y="357">ADIMLAR, MODÜLLER</text><text x="297" y="401">ÇAPLAR</text><text x="297" y="432">DİŞ ÖLÇÜLERİ</text></g>
   </g>
   <g font-size="5" fill="#111" stroke="#111" stroke-width=".3">
    <text x="189" y="215">yması için gerekli elemanların hesabını yapınız.</text>
    <text x="189" y="245">ölüm dairesi koni açısı : Tan δ₁ = z₁ / z₂ = 36/42=Tan 40,6°=Tan 40°36'</text>
    <text x="189" y="255">ş üstü (tornalama) açısı: Tan γ₁ =[z₁+(2.Cos δ₁)] / [z₂ -(2.sin δ₁)]</text>
    <text x="256" y="265">=[36+(2.Cos 40°36')]/[42 -(2.sin 40°36')]</text>
    <text x="256" y="275">=[36+(2.0,759)]/[42 -(2.0,65)]</text>
    <text x="255" y="285">=37,518/40,7 = Tan42,7°=Tan 42°42'</text>
    <text x="189" y="305">ş dibi (frezeleme) açısı : Tan δ₁ =[z₁-(2,4.Cos δ₁)] / [z₂+(2,4.sin δ₁)]</text>
    <text x="256" y="315">= &#160;[36-(2,4.Cos 40°36')] / [42+(2,4.sin 40°36')]</text>
    <text x="256" y="326">=[36-(2,4. 0,759)] / [42+(2,4.0,65)]</text>
    <text x="256" y="336">= 34,178/ 43,56 = Tan 38,1°=Tan 38° 6'</text>
    <text x="189" y="346">rka açı : φ₁=90° - δ₁ = 90-40,6 = 49,4°=49°24'</text>
    <text x="189" y="368">dım (orta) : P = π.m = 3,14.4=12,56 mm</text>
    <text x="189" y="390">nacak</text>
    <text x="189" y="411">ölüm dairesi Çapı : d₁ = m.z₁ = 4.36=144 mm</text>
    <text x="189" y="421">ş üstü çapı : dₐ₁ = d₁+(2.m.Cos δ₁) = 144+(2.4. Cos 40°36')=144+6,072=150,072 mm</text>
    <text x="189" y="443">ş yüksekliği : h = (2.m) + c = (2.m) + (0,2.m) =(2.4)+(0,2.4)=8,8 mm</text>
    <text x="189" y="453">rka diş kalınlığı : s = ( π.m)/2 =(3,14.4)/2=6,28 mm</text>
    <text x="189" y="464">n diş kalınlığı : s₀ = ( π.m₀) / 2 = (3,14.2,5)/2 =3,925 mm</text>
    <text x="189" y="475">ş uzunluğu : bₘₐₓ =(m. z₁) / (6.Sin δ₁) =(4.36)/(6.sin 40°36')= 144/(6.0,65)=36,923 mm</text>
    <text x="189" y="495">urada diş uzunluğu, ön diş kalınlığını verecek şekilde, ön modüle göre hesaplanmalı ve düzeltilmelidir.</text>
    <text x="189" y="506">ş uzunluğu : b₁ =(m₀. z₁) / (6.Sin δ₁) = (2,5.36)/(6. .Sin 40°36') = 90/3,9 =23 mm olacak</text>
    <text x="189" y="516">eal diş sayısı : zᵢ = z₁ / Cos δ₁ = 36/ Cos 40°36' =47</text>
    <text x="190" y="592">Konik Dişli Taslağı, yapılan hesaplara ve açılara göre önce tornalanır. Sonra divizöre bağlanarak ayarlanır.</text>
    <text x="190" y="599">zᵢ₁ = 47 ideal diş sayısına göre m₀ = 2,5 modül çakısı ile dişler açılır. Sonra düzeltme işlemi yapılır.</text>
   </g>
   <!-- crosshair and UCS icon -->
   <g fill="none" stroke="#555" stroke-width=".8"><path d="M526 503.300H555.500M560.500 503.300H590M558 471V500.800M558 505.800V536M555.500 500.800h5v5h-5z"/><path d="M204.300 611V652H246M200.700 648.500h7.600v7.600h-7.600zM247.500 642l10.500 10M258 642l-10.500 10M205.500 600l4.500 4 4.500-4M210 604v5"/></g>
  </g></svg>
  <div class="vlabel">[−][Top][2D Wireframe]</div>
  <div class="vwin d-flex">
   <button class="tb btn" aria-label="Minimize drawing"><svg width="10" height="10"><path d="M.500 5h9v3h-9z" fill="#ddd" stroke="#555"/></svg></button>
   <button class="tb btn" aria-label="Restore drawing"><svg width="10" height="10" fill="none" stroke="#555"><path d="M2.500 2.500V.500h7v7h-2M.500 2.500h7v7h-7zM3 5h2v2H3z"/></svg></button>
   <button class="tb btn" aria-label="Close drawing"><svg width="10" height="10" fill="none" stroke="#555"><path d="M.500.500h3L5 3 6.500.500h3v2L7.500 5l2 2.500v2h-3L5 7 3.500 9.500h-3v-2L2.500 5l-2-2.500z"/></svg></button>
  </div>
  <div class="navbar-strip"><svg width="21" height="190" fill="none" stroke="#ececec" stroke-width="1.500"><circle cx="10" cy="43" r="7"/><path d="M10 66v18M1 75h18M5 98h10v10H5z"/><circle cx="10" cy="130" r="6"/><path d="M5 150h10v8H5z"/></svg></div>
  <div class="logo"><svg width="68" height="75">
   <defs><radialGradient id="ball" cx=".5" cy=".45" r=".55"><stop offset="0" stop-color="#e58aa6"/><stop offset=".7" stop-color="#cc6f8e"/><stop offset="1" stop-color="#5e2238"/></radialGradient><clipPath id="bc"><circle cx="34" cy="32" r="31"/></clipPath></defs>
   <circle cx="34" cy="32" r="31" fill="url(#ball)" stroke="#3b1824"/>
   <g clip-path="url(#bc)"><path d="M12 24q6 14 20 15M57 24q-6 14-20 15M16 22q5 9 15 12M53 22q-5 9-15 12" fill="none" stroke="#8a4a60"/>
   <path d="M21 13l5 4 6-6-2 7 4 5-7 1-7 6 3-9z" fill="#e2572c"/><path d="M48 13l-5 4-6-6 2 7-4 5 7 1 7 6-3-9z" fill="#2463a8"/><circle cx="26" cy="12" r="2" fill="#e2572c"/><circle cx="43" cy="12" r="2" fill="#2463a8"/>
   <path d="M3 47h16q5 8 15 8t15-8h16" fill="none" stroke="#1d3a2c" stroke-width="3"/></g>
   <text x="34" y="45" text-anchor="middle" font-family="DejaVu Sans,sans-serif" font-weight="700" font-size="10" fill="#1a1014">zmit MTAL</text><text x="34" y="52" text-anchor="middle" font-family="DejaVu Sans,sans-serif" font-weight="700" font-size="5" fill="#1a1014">1948</text>
   <text x="34" y="71" text-anchor="middle" font-family="Open Sans,sans-serif" font-style="italic" font-size="11" fill="#444">EĞİTİM TV</text></svg></div>
  <form class="cmd d-flex" onsubmit="return false">
   <div class="cmd-grip d-flex align-items-center justify-content-between px-1"><svg width="5" height="16"><path d="M1 0v16M4 0v16" stroke="#c9c9d2" stroke-dasharray="1 1.500"/></svg><button type="button" class="tb btn" aria-label="Close command line"><svg width="8" height="8"><path d="M1 1l6 6M7 1L1 7" stroke="#fff" stroke-width="1.600"/></svg></button><button type="button" class="tb btn" aria-label="Customize"><svg width="12" height="12"><path d="M1 11l6-6" stroke="#fff" stroke-width="2.200"/><path d="M11 2L9 4 8 3l2-2a3 3 0 1 0 1 1z" fill="#fff"/></svg></button></div>
   <button type="button" class="tb btn gap-1 ps-1" aria-label="Recent commands"><svg width="13" height="11" fill="none" stroke="#777"><path d="M.500.500h12v10H.500zM.500 2.500h12M2 4.500l2 1.500-2 1.500M5 8.500h3"/></svg><i class="car" style="color:#777"></i></button>
   <input aria-label="Type a command" placeholder="Type a command">
   <button type="button" class="tb btn s14" aria-label="Command history"><i class="car up"></i></button>
  </form>
 </main>
</div>

<footer class="bottom d-flex position-relative justify-content-between">
 <nav class="lrow d-flex ps-2 align-items-start" aria-label="Layouts">
  <a class="ltab active d-flex align-items-center px-2" href="#">Model</a><a class="ltab d-flex align-items-center px-2" href="#">Layout1</a><a class="ltab d-flex align-items-center px-2" href="#">Layout2</a>
  <button class="tb btn plus" aria-label="New layout">+</button>
 </nav>
 <div class="status d-flex align-self-end">
  <div><button class="tb btn px-1 fw-semibold">MODEL</button></div>
  <div><button class="tb btn s20" aria-label="Grid"><svg width="13" height="13" class="i"><path d="M3.500 0v13M6.500 0v13M9.500 0v13M0 3.500h13M0 6.500h13M0 9.500h13" stroke-width="1"/></svg></button><button class="tb btn s20" aria-label="Snap"><svg width="12" height="12"><path d="M1 1.500h11M1 6h11M1 10.500h11" stroke="#d3d6de" stroke-width="2" stroke-dasharray="2 2.500"/></svg></button><button class="tb btn s14" aria-label="Snap options"><i class="car"></i></button></div>
  <div><button class="tb btn s20" aria-label="Ortho"><svg width="13" height="13" class="i"><path d="M1 0v12h12M1 7h5v5"/></svg></button><button class="tb btn s20 a" aria-label="Polar tracking"><svg width="14" height="14" class="i" style="stroke:#fff"><circle cx="6.500" cy="7.500" r="5"/><path d="M6 8h7M6 8l6-7"/></svg></button><button class="tb btn s14" aria-label="Polar options"><i class="car"></i></button><button class="tb btn s20" aria-label="Isometric drafting"><svg width="13" height="13" class="i"><path d="M7 1v11M2 2l9 8" stroke="#8f93a0"/><path d="M2 3l4 4M8 12V8" stroke="#c0555f"/></svg></button><button class="tb btn s14" aria-label="Isometric options"><i class="car"></i></button></div>
  <div><button class="tb btn s20 a" aria-label="Object snap tracking"><svg width="14" height="14" class="i" style="stroke:#fff"><path d="M1 12h12M2 12L11 2" /></svg></button><button class="tb btn s20 a" aria-label="Object snap"><svg width="14" height="14" class="i" style="stroke:#fff"><path d="M3 3h10v10H3z"/><path d="M1 1h4v4H1z" fill="#5b8ac0"/></svg></button><button class="tb btn s14" aria-label="Snap list"><i class="car"></i></button><button class="tb btn s20 a" aria-label="Lineweight"><svg width="14" height="13"><path d="M0 2h14M0 5.500h14" stroke="#fff"/><path d="M0 8.500h14M0 11.500h9" stroke="#fff" stroke-width="2"/></svg></button></div>
  <div><button class="tb btn s20 a" aria-label="Annotation visibility"><svg width="14" height="14"><path d="M6 1l5 12-5-3-5 3z" fill="#fff"/><circle cx="11" cy="3.500" r="2" fill="none" stroke="#fff"/></svg></button><button class="tb btn s20" aria-label="Auto scale"><svg width="14" height="14"><path d="M6 1l5 12-5-3-5 3z" fill="#d3d6de"/><path d="M11 1v4M9 3h4" stroke="#d3d6de"/></svg></button><button class="tb btn s20" aria-label="Annotation scale"><svg width="12" height="14"><path d="M6 1l5 12-5-3-5 3z" fill="#d3d6de"/></svg></button><button class="tb btn gap-1">1:1<i class="car me-1"></i></button></div>
  <div><button class="tb btn s20" aria-label="Workspace"><svg width="13" height="13"><circle cx="6.500" cy="6.500" r="3.500" fill="none" stroke="#e4e6ea" stroke-width="2.600"/><circle cx="6.500" cy="6.500" r="5.300" fill="none" stroke="#e4e6ea" stroke-width="2" stroke-dasharray="2.200 1.960"/></svg></button><button class="tb btn s14" aria-label="Workspace list"><i class="car"></i></button></div>
  <div><button class="tb btn s20" aria-label="Annotation monitor"><svg width="13" height="13"><path d="M6.500 0v13M0 6.500h13" stroke="#e4e6ea" stroke-width="1.600"/></svg></button></div>
  <div><button class="tb btn s20" aria-label="Isolate objects"><svg width="14" height="14" class="i"><path d="M1 1h5v5H1zM4 13l2.500-4L9 13z"/><circle cx="11" cy="6" r="2.300"/></svg></button></div>
  <div><button class="tb btn s26" aria-label="Graphics performance"><svg width="20" height="19"><circle cx="12" cy="7" r="6.500" fill="#3d7fc0"/><path d="M5 0v9M0 4.500h10" stroke="#cfe3f5" stroke-width="1.300"/><path d="M0 11h8v7H0z" fill="#f0b93f"/><path d="M8 13l4 4 8-9" fill="none" stroke="#54b35c" stroke-width="3"/></svg></button></div>
  <div><button class="tb btn s20" aria-label="Clean screen"><svg width="14" height="12" class="i"><path d="M1 1h12v10H1z"/><path d="M3 9l3-3M11 3L8 6M3 7v2h2M9 3h2v2"/></svg></button><button class="tb btn s20" aria-label="Customization"><svg width="14" height="12"><path d="M0 1.500h14M0 6h14M0 10.500h14" stroke="#e4e6ea" stroke-width="1.800"/></svg></button></div>
 </div>
 <span class="tline"></span>
</footer>
</div>
</body>
</html>
